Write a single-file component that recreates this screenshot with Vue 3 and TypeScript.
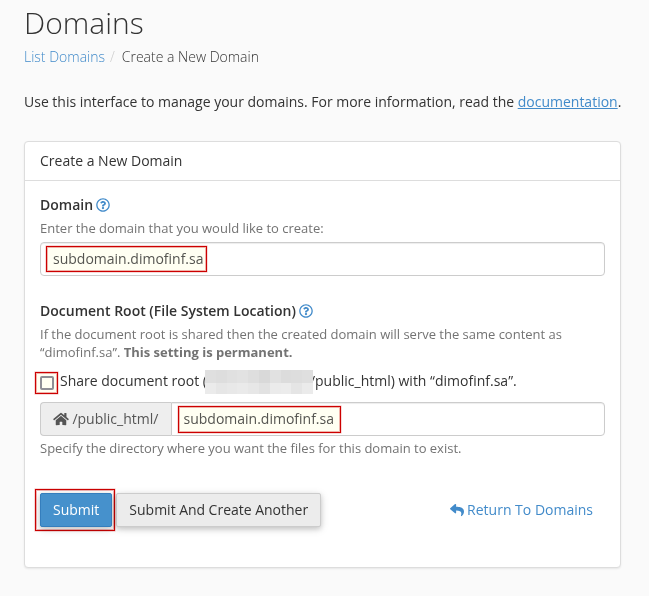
<script setup lang="ts">
import { ref } from 'vue'

const domain = ref('subdomain.dimofinf.sa')
const docRoot = ref('subdomain.dimofinf.sa')
const shareRoot = ref(false)

const redacted: string[] = [
  '#dfdfdf', '#dddddd', '#e0e0e0', '#e2e2e2', '#dedede', '#d9d9d9', '#e1e1e1', '#dcdcdc', '#dddddd', '#dfdfdf',
  '#ebebeb', '#e6e6e6', '#e8e8e8', '#eaeaea', '#e7e7e7', '#e2e2e2', '#ebebeb', '#ececec', '#e5e5e5', '#ebebeb',
]

const questionPath =
  'M256 8C119.043 8 8 119.083 8 256c0 136.997 111.043 248 248 248s248-111.003 248-248C504 119.083 392.957 8 256 8zm0 448c-110.532 0-200-89.431-200-200 0-110.495 89.472-200 200-200 110.491 0 200 89.471 200 200 0 110.53-89.431 200-200 200zm107.244-255.2c0 67.052-72.421 68.084-72.421 92.863V300c0 6.627-5.373 12-12 12h-45.647c-6.627 0-12-5.373-12-12v-8.659c0-35.745 27.1-50.034 47.579-61.516 17.561-9.845 28.324-16.541 28.324-29.579 0-17.246-21.999-28.693-39.784-28.693-23.189 0-33.894 10.977-48.942 29.969-4.057 5.12-11.46 6.071-16.666 2.124l-27.824-21.098c-5.107-3.872-6.251-11.066-2.644-16.363C184.846 131.491 214.94 112 261.794 112c49.071 0 101.45 38.304 101.45 88.8zM298 368c0 23.159-18.841 42-42 42s-42-18.841-42-42 18.841-42 42-42 42 18.841 42 42z'
</script>

<template>
  <main class="page">
    <h1 class="title">Domains</h1>
    <nav class="breadcrumb">
      <a class="crumb-link">List Domains</a>
      <span class="sep">/</span>
      <span>Create a New Domain</span>
    </nav>
    <p class="intro">
      Use this interface to manage your domains. For more information, read the <a class="doc-link">documentation</a>.
    </p>

    <section class="panel">
      <header class="panel-head">Create a New Domain</header>
      <form class="panel-body" @submit.prevent>
        <div class="label">
          Domain
          <svg class="help" viewBox="0 0 512 512"><path :d="questionPath" /></svg>
        </div>
        <p class="hint">Enter the domain that you would like to create:</p>
        <div class="field field-domain">
          <input v-model="domain" class="control" type="text" />
          <span class="mark mark-domain"></span>
        </div>

        <div class="label label-root">
          Document Root (File System Location)
          <svg class="help" viewBox="0 0 512 512"><path :d="questionPath" /></svg>
        </div>
        <p class="hint">
          If the document root is shared then the created domain will serve the same content as “dimofinf.sa”.
          <strong>This setting is permanent.</strong>
        </p>
        <label class="share">
          <input v-model="shareRoot" class="check" type="checkbox" />
          <span class="share-text">Share document root (</span>
          <span class="redacted">
            <i v-for="(shade, i) in redacted" :key="i" :style="{ background: shade }"></i>
          </span>
          <span class="share-text">/public_html) with “dimofinf.sa”.</span>
          <span class="mark mark-check"></span>
        </label>
        <div class="field group">
          <span class="addon">
            <svg class="home" viewBox="0 0 576 512">
              <path d="M280.37 148.26L96 300.11V464a16 16 0 0 0 16 16l112.06-.29a16 16 0 0 0 15.92-16V368a16 16 0 0 1 16-16h64a16 16 0 0 1 16 16v95.64a16 16 0 0 0 16 16.05L464 480a16 16 0 0 0 16-16V300L295.67 148.26a12.19 12.19 0 0 0-15.3 0zM571.6 251.47L488 182.56V44.05a12 12 0 0 0-12-12h-56a12 12 0 0 0-12 12v72.61L318.47 43a48 48 0 0 0-61 0L4.34 251.47a12 12 0 0 0-1.6 16.9l25.5 31A12 12 0 0 0 45.15 301l235.22-193.74a12.19 12.19 0 0 1 15.3 0L530.9 301a12 12 0 0 0 16.9-1.6l25.5-31a12 12 0 0 0-1.7-16.93z" />
            </svg>
            /public_html/
          </span>
          <input v-model="docRoot" class="control joined" type="text" />
          <span class="mark mark-root"></span>
        </div>
        <p class="hint hint-after">Specify the directory where you want the files for this domain to exist.</p>

        <div class="actions">
          <span class="submit-wrap">
            <button class="btn primary" type="submit">Submit</button>
            <span class="mark mark-submit"></span>
          </span>
          <button class="btn another" type="button">Submit And Create Another</button>
          <a class="return">
            <svg class="reply" viewBox="0 0 512 512">
              <path d="M8.309 189.836L184.313 37.851C199.719 24.546 224 35.347 224 56.015v80.053c160.629 1.839 288 34.032 288 186.258 0 61.441-39.581 122.309-83.333 154.132-13.653 9.931-33.111-2.533-28.077-18.631 45.344-145.012-21.507-183.51-176.59-185.742V360c0 20.7-24.3 31.453-39.687 18.164l-176.004-152c-11.071-9.562-11.086-26.753 0-36.328z" />
            </svg>
            Return To Domains
          </a>
        </div>
      </form>
    </section>
  </main>
</template>

<style>
body {
  background: #fafafa;
  overflow: hidden;
}
</style>

<style scoped>
.page {
  box-sizing: border-box;
  height: 596px;
  padding: 6px 28px 0 24px;
  font: 14px/20px "Open Sans", "Noto Sans", sans-serif;
  color: #333;
}
.title {
  margin: 0;
  font-size: 30px;
  font-weight: 300;
  line-height: 33px;
}
.breadcrumb {
  display: flex;
  margin-top: 8px;
  font-weight: 300;
}
.sep {
  padding: 0 7px 0 5px;
  color: #ccc;
}
a {
  color: #428bca;
}
.intro {
  margin: 25px 0 29px;
  white-space: nowrap;
  word-spacing: -0.06px;
}
.doc-link {
  text-decoration: underline;
}
.panel {
  box-sizing: border-box;
  height: 427px;
  background: #fff;
  border: 1px solid #ddd;
  border-radius: 4px;
  box-shadow: 0 1px 2px rgba(0, 0, 0, 0.08);
}
.panel-head {
  padding: 9px 15px;
  line-height: 20px;
  border-bottom: 1px solid #ddd;
}
.panel-body {
  padding: 14px 15px 0;
}
.label {
  display: flex;
  align-items: center;
  gap: 3.4px;
  font-weight: 600;
  line-height: 20px;
}
.label-root {
  margin-top: 25px;
}
.help {
  width: 14px;
  height: 14px;
  fill: #428bca;
}
.hint {
  margin: 4px 0 4px;
  font-size: 13px;
  line-height: 18px;
  color: #737373;
  word-spacing: -0.05px;
}
.field {
  position: relative;
  display: flex;
}
.field-domain {
  margin-top: 5px;
}
.control {
  box-sizing: border-box;
  flex: 1;
  min-width: 0;
  height: 34px;
  padding: 5px 12px 7px;
  font: inherit;
  color: #555;
  background: #fff;
  border: 1px solid #ccc;
  border-radius: 4px;
  box-shadow: inset 0 1px 1px rgba(0, 0, 0, 0.075);
  outline: none;
}
.joined {
  border-radius: 0 4px 4px 0;
  padding: 5px 11.5px 7px;
}
.addon {
  box-sizing: border-box;
  display: flex;
  align-items: center;
  gap: 3.4px;
  width: 131px;
  padding-left: 12px;
  color: #555;
  background: #eee;
  border: 1px solid #ccc;
  border-right: 0;
  border-radius: 4px 0 0 4px;
}
.home {
  width: 16px;
  height: 14px;
  fill: #555;
}
.share {
  position: relative;
  display: flex;
  align-items: center;
  height: 24px;
  margin: 9px 0 8px;
}
.check {
  box-sizing: border-box;
  appearance: none;
  width: 14px;
  height: 14px;
  margin: 2px 6px 0 0;
  background: #fff;
  border: 2px solid #8f8f9d;
  border-radius: 2px;
}
.share-text {
  line-height: 20px;
  margin-top: -3px;
}
.redacted {
  position: relative;
  z-index: 1;
  display: grid;
  grid-template-columns: repeat(10, 1fr);
  grid-template-rows: 13px 11px;
  width: 108px;
  margin: 0 -3px 0 -2px;
}
.hint-after {
  margin-top: 3px;
}
.actions {
  display: flex;
  align-items: center;
  gap: 4px;
  margin-top: 36px;
}
.submit-wrap {
  position: relative;
  display: flex;
}
.btn {
  box-sizing: border-box;
  height: 34px;
  padding: 0 12px;
  font: inherit;
  color: #333;
  white-space: nowrap;
  background: #ececec;
  border: 1px solid #ccc;
  border-radius: 2px;
  box-shadow: 0 2px 5px rgba(0, 0, 0, 0.16), 0 2px 10px rgba(0, 0, 0, 0.12);
}
.primary {
  color: #fff;
  background: #4691cc;
  border-color: #357ebd;
}
.another {
  padding: 0 11.6px 0 12px;
  word-spacing: -0.15px;
}
.return {
  display: flex;
  align-items: center;
  gap: 3.4px;
  margin-left: auto;
  padding-right: 12px;
}
.reply {
  width: 14px;
  height: 14px;
  fill: #428bca;
}
.mark {
  position: absolute;
  box-sizing: border-box;
  border: 1px solid #cc0000;
  outline: 1px solid rgba(204, 0, 0, 0.3);
  outline-offset: -2px;
  background: #fffff2;
  mix-blend-mode: multiply;
  pointer-events: none;
  box-shadow: 0 0 0 0.5px rgba(204, 0, 0, 0.3);
}
.mark-domain {
  left: 6px;
  top: 4px;
  width: 161px;
  height: 26px;
}
.mark-check {
  left: -5px;
  top: 2px;
  width: 23px;
  height: 22px;
}
.mark-root {
  left: 138px;
  top: 4px;
  width: 163px;
  height: 27px;
}
.mark-submit {
  left: -5px;
  top: -4px;
  width: 80px;
  height: 42px;
  background: transparent;
}
</style>
